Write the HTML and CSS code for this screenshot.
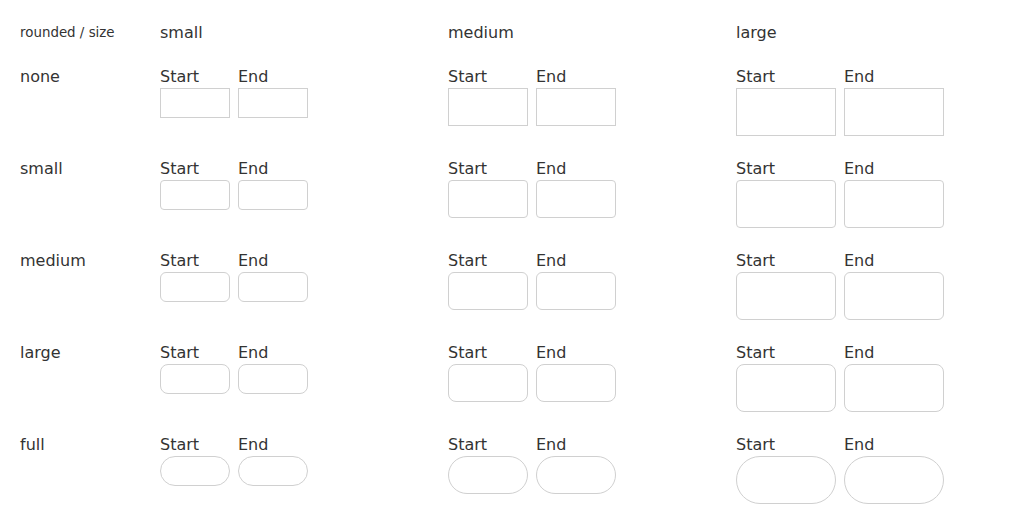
FILE: index.html
```html
<!DOCTYPE html>
<html>
<head>
<meta charset="utf-8">
<link rel="stylesheet" href="styles.css">
</head>
<body>
<div class="grid">
  <div class="corner">rounded / size</div>
  <div class="head">small</div>
  <div class="head">medium</div>
  <div class="head">large</div>

  <div class="rowlabel">none</div>
  <div class="pair"><div class="field"><span class="lbl">Start</span><span class="box sm r-none"></span></div><div class="field"><span class="lbl">End</span><span class="box sm r-none"></span></div></div>
  <div class="pair"><div class="field"><span class="lbl">Start</span><span class="box md r-none"></span></div><div class="field"><span class="lbl">End</span><span class="box md r-none"></span></div></div>
  <div class="pair"><div class="field"><span class="lbl">Start</span><span class="box lg r-none"></span></div><div class="field"><span class="lbl">End</span><span class="box lg r-none"></span></div></div>

  <div class="rowlabel">small</div>
  <div class="pair"><div class="field"><span class="lbl">Start</span><span class="box sm r-sm"></span></div><div class="field"><span class="lbl">End</span><span class="box sm r-sm"></span></div></div>
  <div class="pair"><div class="field"><span class="lbl">Start</span><span class="box md r-sm"></span></div><div class="field"><span class="lbl">End</span><span class="box md r-sm"></span></div></div>
  <div class="pair"><div class="field"><span class="lbl">Start</span><span class="box lg r-sm"></span></div><div class="field"><span class="lbl">End</span><span class="box lg r-sm"></span></div></div>

  <div class="rowlabel">medium</div>
  <div class="pair"><div class="field"><span class="lbl">Start</span><span class="box sm r-md"></span></div><div class="field"><span class="lbl">End</span><span class="box sm r-md"></span></div></div>
  <div class="pair"><div class="field"><span class="lbl">Start</span><span class="box md r-md"></span></div><div class="field"><span class="lbl">End</span><span class="box md r-md"></span></div></div>
  <div class="pair"><div class="field"><span class="lbl">Start</span><span class="box lg r-md"></span></div><div class="field"><span class="lbl">End</span><span class="box lg r-md"></span></div></div>

  <div class="rowlabel">large</div>
  <div class="pair"><div class="field"><span class="lbl">Start</span><span class="box sm r-lg"></span></div><div class="field"><span class="lbl">End</span><span class="box sm r-lg"></span></div></div>
  <div class="pair"><div class="field"><span class="lbl">Start</span><span class="box md r-lg"></span></div><div class="field"><span class="lbl">End</span><span class="box md r-lg"></span></div></div>
  <div class="pair"><div class="field"><span class="lbl">Start</span><span class="box lg r-lg"></span></div><div class="field"><span class="lbl">End</span><span class="box lg r-lg"></span></div></div>

  <div class="rowlabel">full</div>
  <div class="pair"><div class="field"><span class="lbl">Start</span><span class="box sm r-full"></span></div><div class="field"><span class="lbl">End</span><span class="box sm r-full"></span></div></div>
  <div class="pair"><div class="field"><span class="lbl">Start</span><span class="box md r-full"></span></div><div class="field"><span class="lbl">End</span><span class="box md r-full"></span></div></div>
  <div class="pair"><div class="field"><span class="lbl">Start</span><span class="box lg r-full"></span></div><div class="field"><span class="lbl">End</span><span class="box lg r-full"></span></div></div>
</div>
</body>
</html>
```
FILE: styles.css
```css
html, body {
  margin: 0;
  padding: 0;
  background: #fff;
}
body {
  font-family: "DejaVu Sans", sans-serif;
  color: #333;
  padding: 24px 20px;
}
.grid {
  display: grid;
  grid-template-columns: 140px 288px 288px 288px;
  row-gap: 24px;
  align-items: start;
}
.corner {
  font-size: 13.4px;
  line-height: 18px;
  height: 20px;
}
.head, .rowlabel {
  font-size: 16px;
  line-height: 18px;
  height: 20px;
}
.pair {
  display: flex;
  gap: 8px;
}
.field {
  display: flex;
  flex-direction: column;
}
.lbl {
  font-size: 16px;
  line-height: 17px;
  height: 20px;
}
.box {
  display: block;
  box-sizing: border-box;
  border: 1px solid #d0d0d0;
  background: #fff;
}
.sm { width: 70px; height: 30px; }
.md { width: 80px; height: 38px; }
.lg { width: 100px; height: 48px; }
.r-none { border-radius: 0; }
.r-sm { border-radius: 4px; }
.r-md { border-radius: 6px; }
.r-lg { border-radius: 8px; }
.r-full { border-radius: 9999px; }
```
